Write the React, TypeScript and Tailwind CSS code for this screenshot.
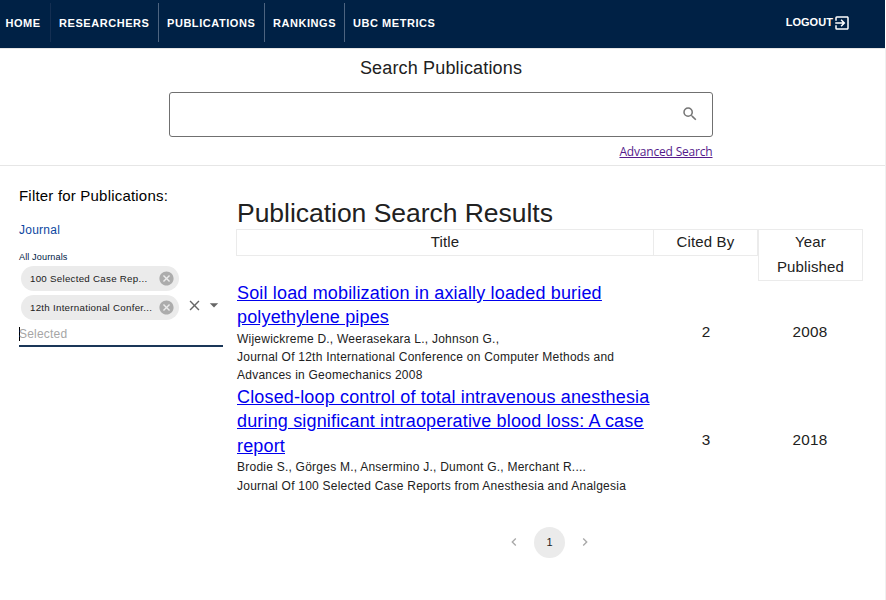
import React from "react";
import {
  MdArrowDropDown,
  MdCancel,
  MdClose,
  MdExitToApp,
  MdNavigateBefore,
  MdNavigateNext,
  MdSearch,
} from "react-icons/md";

const results = [
  {
    title: ["Soil load mobilization in axially loaded buried", "polyethylene pipes"],
    meta: [
      "Wijewickreme D., Weerasekara L., Johnson G.,",
      "Journal Of 12th International Conference on Computer Methods and",
      "Advances in Geomechanics 2008",
    ],
    titleClass: "leading-[24.3px]",
    metaClass: "leading-[18.2px] pb-[0.5px]",
    cited: 2,
    year: 2008,
  },
  {
    title: [
      "Closed-loop control of total intravenous anesthesia",
      "during significant intraoperative blood loss: A case",
      "report",
    ],
    meta: [
      "Brodie S., Görges M., Ansermino J., Dumont G., Merchant R....",
      "Journal Of 100 Selected Case Reports from Anesthesia and Analgesia",
    ],
    titleClass: "leading-[24.6px]",
    metaClass: "leading-[18.7px]",
    cited: 3,
    year: 2018,
  },
];

function NavItem({ label, className }: { label: string; className: string }) {
  return (
    <a className={`flex h-[39px] items-center whitespace-nowrap ${className}`}>
      <span className="pt-[2px]">{label}</span>
    </a>
  );
}

function Chip({ label }: { label: string }) {
  return (
    <div className="flex h-[25px] w-[158px] items-center justify-between rounded-full bg-[#ebebeb] pr-[4px] pl-[9px]">
      <span className="pt-px text-[9.75px] tracking-[0.26px] whitespace-nowrap text-[#212121]">{label}</span>
      <MdCancel className="size-[17px] text-[#acacac]" />
    </div>
  );
}

export default function App() {
  return (
    <div className="flex h-[600px] w-[886px] flex-col overflow-hidden bg-white font-['Liberation_Sans',Arial,sans-serif] text-[#212121]">
      <header className="flex h-12 w-[885px] shrink-0 bg-[#002145] pt-[3px] text-[11px] font-bold tracking-[0.55px] text-white">
        <NavItem label="HOME" className="w-[51px] border-r border-[#142f52] pl-[5.5px]" />
        <NavItem label="RESEARCHERS" className="w-[108px] border-r border-[#4d6480] pl-[8px]" />
        <NavItem label="PUBLICATIONS" className="w-[106px] border-r border-[#4d6480] pl-[8px]" />
        <NavItem label="RANKINGS" className="w-[80px] border-r border-[#4d6480] pl-[8px]" />
        <NavItem label="UBC METRICS" className="pl-[8px]" />
        <a className="mr-[34px] ml-auto flex h-[39px] items-center">
          <span className="tracking-[0.05px]">LOGOUT</span>
          <MdExitToApp className="mt-px size-[18px]" />
        </a>
      </header>

      <div className="flex grow flex-col border-r border-[#f0f0f0]">
        <section className="flex h-[118px] shrink-0 flex-col items-center border-y border-[#e6e6e6] pt-[5px]">
          <h1 className="mr-[3px] text-[18px] leading-[28px] tracking-[0.16px]">Search Publications</h1>
          <div className="mt-[10px] mr-[3px] flex h-[45px] w-[544px] items-center justify-end rounded-[3px] border border-[#707070] pr-[13px]">
            <MdSearch className="mb-[2px] size-[18px] text-[#757575]" />
          </div>
          <div className="mt-[6px] mr-[5px] flex w-[545px] justify-end">
            <a className="font-['Open_Sans',sans-serif] text-[12px] leading-[18px] tracking-[-0.19px] text-[#551a8b] underline">
              Advanced Search
            </a>
          </div>
        </section>

        <main className="flex grow">
          <aside className="flex w-[237px] shrink-0 flex-col pt-[20px] pl-[19px]">
            <h2 className="text-[15px] leading-[20px] tracking-[0.2px] text-black">Filter for Publications:</h2>
            <h3 className="mt-[16px] text-[12px] leading-[16px] tracking-[0.25px] text-[#0d47a1]">Journal</h3>
            <label className="mt-[13px] text-[9.1px] leading-[12px] tracking-[0.12px] text-[#002145]">All Journals</label>
            <div className="flex h-[84px] w-[204px] border-b-2 border-[#1a3658]">
              <div className="flex flex-col pt-[3px]">
                <div className="flex flex-col gap-[4px] pl-[2px]">
                  <Chip label="100 Selected Case Rep..." />
                  <Chip label="12th International Confer..." />
                </div>
                <div className="mt-[7px] flex h-[14px] items-center border-l border-black text-[12px] tracking-[0.2px] text-[#a6a6a6]">
                  <span className="-ml-px">Selected</span>
                </div>
              </div>
              <div className="flex h-[84px] items-center pl-[7px] text-[#666]">
                <MdClose className="size-[17px]" />
                <MdArrowDropDown className="ml-[1px] size-[20px]" />
              </div>
            </div>
          </aside>

          <section className="flex w-[626px] flex-col pt-[31px]">
            <h2 className="text-[26.5px] leading-[32px] tracking-[-0.03px] whitespace-nowrap">Publication Search Results</h2>
            <div className="flex h-[52px] items-start text-center text-[15px] leading-[24.8px] tracking-[0.14px]">
              <div className="-ml-px h-[27px] w-[418px] border border-[#ebebeb]">Title</div>
              <div className="-ml-px h-[27px] w-[105px] border border-[#ebebeb]">Cited By</div>
              <div className="h-[52px] w-[105px] border border-[#ebebeb]">Year<br />Published</div>
            </div>
            {results.map((r) => (
              <article key={r.year} className="flex items-center">
                <div className="w-[417px] whitespace-nowrap">
                  <a className={`block text-[18px] tracking-[0.16px] text-[#0000ee] underline ${r.titleClass}`}>
                    {r.title.map((t) => (
                      <span key={t} className="block underline">{t}</span>
                    ))}
                  </a>
                  <div className={`text-[12px] tracking-[0.235px] ${r.metaClass}`}>
                    {r.meta.map((t) => (
                      <p key={t}>{t}</p>
                    ))}
                  </div>
                </div>
                <div className="w-[104px] text-center text-[15.3px] tracking-[0.2px]">{r.cited}</div>
                <div className="w-[104px] text-center text-[15.3px] tracking-[0.2px]">{r.year}</div>
              </article>
            ))}
            <nav className="mt-[31px] mr-px flex items-center justify-center gap-[12px] text-[#a8a8a8]">
              <MdNavigateBefore className="size-[16px]" />
              <span className="flex size-[31px] items-center justify-center rounded-full bg-[#ebebeb] text-[11px] text-[#212121]">
                1
              </span>
              <MdNavigateNext className="size-[16px]" />
            </nav>
          </section>
        </main>
      </div>
    </div>
  );
}
